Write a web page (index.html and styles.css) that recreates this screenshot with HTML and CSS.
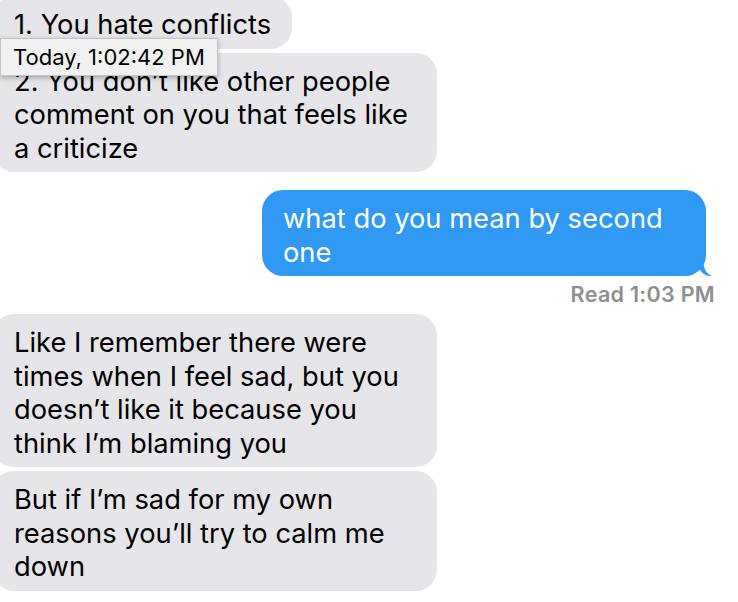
FILE: index.html
```html
<!DOCTYPE html>
<html>
<head>
<meta charset="utf-8">
<link rel="stylesheet" href="styles.css">
</head>
<body>
<div class="chat">
  <div class="row in">
    <div class="bubble gray">1. You hate conflicts</div>
  </div>
  <div class="row in">
    <div class="bubble gray full">2. You don’t like other people<br>comment on you that feels like<br>a criticize</div>
  </div>
  <div class="row out">
    <div class="bubble blue full">what do you mean by second<br>one<svg class="tail" width="16" height="20" viewBox="0 0 16 20"><path d="M0 0 C0 8 2 16 9 19.2 C11 19.9 13 20 14.6 19.8 C8 17 6 11 6 0 Z" fill="#2f99f4"/></svg></div>
  </div>
  <div class="read">Read 1:03 PM</div>
  <div class="row in">
    <div class="bubble gray full">Like I remember there were<br>times when I feel sad, but you<br>doesn’t like it because you<br>think I’m blaming you</div>
  </div>
  <div class="row in">
    <div class="bubble gray full">But if I’m sad for my own<br>reasons you’ll try to calm me<br>down</div>
  </div>
  <div class="tooltip">Today, 1:02:42 PM</div>
</div>
</body>
</html>
```
FILE: styles.css
```css
html, body {
  margin: 0;
  padding: 0;
  background: #ffffff;
  overflow: hidden;
}
body {
  width: 738px;
  height: 602px;
  font-family: Inter, "Liberation Sans", sans-serif;
}
.chat {
  position: relative;
  display: flex;
  flex-direction: column;
  gap: 4px;
  margin-top: -4px;
  padding-right: 32px;
}
.row {
  display: flex;
}
.row.in {
  justify-content: flex-start;
  margin-left: -7px;
}
.row.out {
  justify-content: flex-end;
  margin-top: 14px;
}
.bubble {
  position: relative;
  font-size: 27.3px;
  line-height: 33.5px;
  padding: 12px 21px 7px 21px;
  border-radius: 21px;
  box-sizing: border-box;
  white-space: nowrap;
}
.bubble.full {
  width: 444px;
}
.gray {
  background: #e5e5ea;
  color: #000000;
}
.blue {
  background: #2f99f4;
  color: #ffffff;
}
.tail {
  position: absolute;
  right: -7px;
  bottom: 0;
}
.read {
  align-self: flex-end;
  margin-right: -9px;
  margin-top: 2px;
  margin-bottom: 4px;
  font-size: 21.5px;
  line-height: 24px;
  font-weight: 600;
  letter-spacing: 0.3px;
  color: #8e8e93;
}
.tooltip {
  position: absolute;
  left: 0;
  top: 42px;
  width: 218px;
  height: 38px;
  box-sizing: border-box;
  padding: 5px 0 0 12px;
  background: #f1f1f1;
  border: 1px solid #c4c4c4;
  box-shadow: 0 2px 5px rgba(0, 0, 0, 0.28);
  font-size: 22px;
  line-height: 26px;
  color: #000000;
  white-space: nowrap;
}
```
